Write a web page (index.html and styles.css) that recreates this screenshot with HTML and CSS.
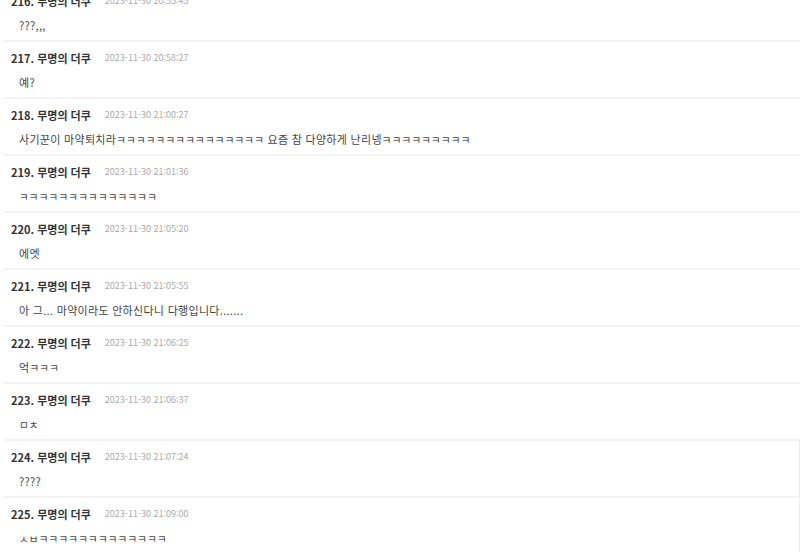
FILE: index.html
```html
<!DOCTYPE html>
<html lang="ko">
<head>
<meta charset="utf-8">
<link rel="stylesheet" href="styles.css">
</head>
<body>
<div class="list">
  <div class="item">
    <div class="head"><span class="name">216. 무명의 더쿠</span><span class="date">2023-11-30 20:55:45</span></div>
    <div class="text">???,,,</div>
  </div>
  <div class="item">
    <div class="head"><span class="name">217. 무명의 더쿠</span><span class="date">2023-11-30 20:58:27</span></div>
    <div class="text">예?</div>
  </div>
  <div class="item">
    <div class="head"><span class="name">218. 무명의 더쿠</span><span class="date">2023-11-30 21:00:27</span></div>
    <div class="text">사기꾼이 마약퇴치라<span class="k">ㅋㅋㅋㅋㅋㅋㅋㅋㅋㅋㅋㅋㅋㅋㅋ</span> 요즘 참 다양하게 난리넹<span class="k">ㅋㅋㅋㅋㅋㅋㅋㅋㅋ</span></div>
  </div>
  <div class="item">
    <div class="head"><span class="name">219. 무명의 더쿠</span><span class="date">2023-11-30 21:01:36</span></div>
    <div class="text"><span class="k">ㅋㅋㅋㅋㅋㅋㅋㅋㅋㅋㅋㅋㅋㅋ</span></div>
  </div>
  <div class="item">
    <div class="head"><span class="name">220. 무명의 더쿠</span><span class="date">2023-11-30 21:05:20</span></div>
    <div class="text">에엣</div>
  </div>
  <div class="item">
    <div class="head"><span class="name">221. 무명의 더쿠</span><span class="date">2023-11-30 21:05:55</span></div>
    <div class="text">아 그... 마약이라도 안하신다니 다행입니다.......</div>
  </div>
  <div class="item">
    <div class="head"><span class="name">222. 무명의 더쿠</span><span class="date">2023-11-30 21:06:25</span></div>
    <div class="text">억<span class="k">ㅋㅋㅋ</span></div>
  </div>
  <div class="item">
    <div class="head"><span class="name">223. 무명의 더쿠</span><span class="date">2023-11-30 21:06:37</span></div>
    <div class="text"><span class="k">ㅁㅊ</span></div>
  </div>
  <div class="item edge">
    <div class="head"><span class="name">224. 무명의 더쿠</span><span class="date">2023-11-30 21:07:24</span></div>
    <div class="text">????</div>
  </div>
  <div class="item edge">
    <div class="head"><span class="name">225. 무명의 더쿠</span><span class="date">2023-11-30 21:09:00</span></div>
    <div class="text"><span class="k">ㅅㅂㅋㅋㅋㅋㅋㅋㅋㅋㅋㅋㅋㅋㅋ</span></div>
  </div>
</div>
</body>
</html>
```
FILE: styles.css
```css
html, body {
  margin: 0;
  padding: 0;
  background: #fff;
}
body {
  font-family: "Noto Sans CJK KR", "Noto Sans", sans-serif;
  color: #333;
  overflow: hidden;
}
.list {
  margin-top: -15px;
  margin-left: 4px;
}
.item {
  padding: 9px 0 7px 7px;
  border-bottom: 2px solid #f3f3f3;
}
.item.edge {
  border-right: 1px solid #ececec;
}
.head {
  display: flex;
  align-items: center;
  height: 14px;
  gap: 14px;
}
.name {
  font-size: 11px;
  font-weight: 700;
  color: #333;
  line-height: 14px;
}
.date {
  font-size: 9px;
  color: #aaa;
  line-height: 14px;
}
.text {
  margin-top: 9px;
  padding-left: 8px;
  height: 16px;
  font-size: 11px;
  line-height: 16px;
  color: #444;
  letter-spacing: 0.3px;
  white-space: nowrap;
}
.k {
  font-size: 10.5px;
  line-height: 16px;
  letter-spacing: 0.2px;
}
```
